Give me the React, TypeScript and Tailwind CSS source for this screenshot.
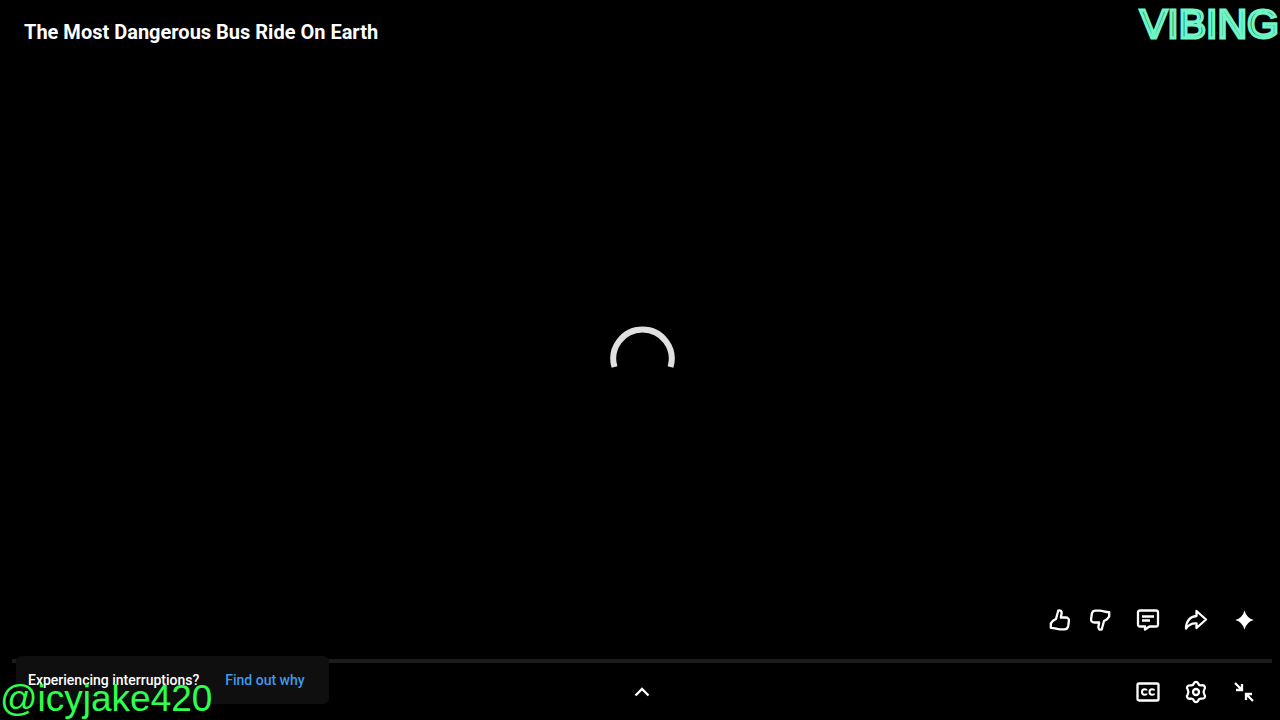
import type { ReactNode } from 'react';

interface IconButtonProps {
  label: string;
  children: ReactNode;
}

function IconButton({ label, children }: IconButtonProps) {
  return (
    <button type="button" aria-label={label} className="flex h-6 w-6 items-center justify-center text-white">
      <svg
        viewBox="0 0 24 24"
        className="h-6 w-6"
        fill="none"
        stroke="currentColor"
        strokeWidth="2.3"
        strokeLinejoin="round"
      >
        {children}
      </svg>
    </button>
  );
}

export default function App() {
  return (
    <div className="relative flex min-h-screen flex-col overflow-hidden bg-black font-['Roboto',sans-serif] text-white">
      <header className="flex items-start justify-between pr-px pl-6">
        <h1 className="pt-[18px] text-xl leading-7 font-bold">The Most Dangerous Bus Ride On Earth</h1>
        <span className="font-['Liberation_Sans',sans-serif] text-[41px] leading-[48px] text-[#0f6b4c] [-webkit-text-stroke:3px_#6ff5c6]">
          VIBING
        </span>
      </header>

      {/* Buffering spinner */}
      <div role="status" aria-label="Loading" className="absolute inset-0 flex items-center justify-center pb-0.5 pl-1">
        <svg viewBox="0 0 66 66" className="h-[66px] w-[66px]" fill="none" stroke="#e0e0e0" strokeWidth="6">
          <path d="M5.500 41A29.200 29.200 0 1 1 61.500 41" />
        </svg>
      </div>

      <footer className="relative mt-auto">
        {/* Video actions */}
        <div className="flex items-center justify-end gap-6 pr-6 pb-[27px]">
          <div className="flex gap-4">
            <IconButton label="Like">
              <path d="M2.800 19.800V15.500L5 12.800L8 11L10.300 2.500C12.500 1.800 14 3.300 13.600 5.500L12.800 9.500H17.500C20 9.500 21.200 11 20.900 13L20.200 18C19.800 20.300 18.500 21.300 16.500 21.300H12C9 21.300 7 19.800 2.800 19.800Z" />
            </IconButton>
            <IconButton label="Dislike">
              <path d="M21.200 4.200V8.500L19 11.200L16 13L13.700 21.500C11.500 22.200 10 20.700 10.400 18.500L11.200 14.500H6.500C4 14.500 2.800 13 3.100 11L3.800 6C4.200 3.700 5.500 2.700 7.500 2.700H12C15 2.700 17 4.200 21.200 4.200Z" />
            </IconButton>
          </div>
          <IconButton label="Comments">
            <path d="M4 2.500H20Q22 2.500 22 4.500V16.500Q22 18.500 20 18.500H13.500L9 21.500V18.500H4Q2 18.500 2 16.500V4.500Q2 2.500 4 2.500Z" />
            <path d="M6 8.500H18M6 12.500H14" />
          </IconButton>
          <IconButton label="Share">
            <path d="M12.500 3L22 11.500L12.500 20V15.500C8 15 4.500 17 2 20.500C2 13 6 8.500 12.500 8Z" />
          </IconButton>
          <IconButton label="Ask">
            <path
              d="M12.500 2.500Q14.500 10 21.800 12Q14.500 14 12.500 21.500Q10.500 14 3.200 12Q10.500 10 12.500 2.500Z"
              fill="currentColor"
              stroke="none"
            />
          </IconButton>
        </div>

        <div className="pr-2 pl-3">
          <div className="h-1 bg-[#1c1c1c]" />
        </div>

        <div className="grid grid-cols-[1fr_auto_1fr] items-center pt-[17px] pr-6 pb-4 pl-7">
          <span />
          <IconButton label="More videos">
            <path d="M5.500 15.500L12 9L18.500 15.500" strokeLinejoin="miter" />
          </IconButton>
          <div className="flex justify-end gap-6">
            <IconButton label="Subtitles">
              <rect x="1.500" y="3.500" width="21" height="17" rx="1.500" />
              <path
                d="M10.500 10.500Q10.500 9.300 8.500 9.300Q6 9.300 6 12T8.500 14.700Q10.500 14.700 10.500 13.500M18 10.500Q18 9.300 16 9.300Q13.500 9.300 13.500 12T16 14.700Q18 14.700 18 13.500"
                strokeWidth="2"
              />
            </IconButton>
            <IconButton label="Settings">
              <path d="M9.800 3.500Q10.500 1.800 12 1.800T14.200 3.500Q15 5.700 17 5.400Q19.800 4.800 20.700 6.500T20.300 9.500Q18.800 12 20.300 14.500Q21.600 16 20.700 17.500T17 18.600Q15 18.300 14.200 20.500Q13.500 22.200 12 22.200T9.800 20.500Q9 18.300 7 18.600Q4.200 19.200 3.300 17.500T3.700 14.500Q5.200 12 3.700 9.500Q2.400 8 3.300 6.500T7 5.400Q9 5.700 9.800 3.500Z" />
              <circle cx="12" cy="12" r="3" />
            </IconButton>
            <IconButton label="Exit full screen">
              <path d="M3 3L10 10M10 4V10H4M21 21L14 14M14 20V14H20" strokeLinejoin="miter" />
            </IconButton>
          </div>
        </div>

        {/* Interruption notice, over the progress bar */}
        <div className="absolute bottom-4 left-4 flex h-12 items-center gap-[26px] rounded-md bg-[#0f0f0f] pr-6 pl-3 text-sm font-medium">
          <span>Experiencing interruptions?</span>
          <a href="#" className="text-[#3e9bee]">
            Find out why
          </a>
        </div>
        <span className="absolute bottom-0 left-0 font-['Liberation_Sans',sans-serif] text-[37px] leading-[42px] text-[#2eff4f]">
          @icyjake420
        </span>
      </footer>
    </div>
  );
}
